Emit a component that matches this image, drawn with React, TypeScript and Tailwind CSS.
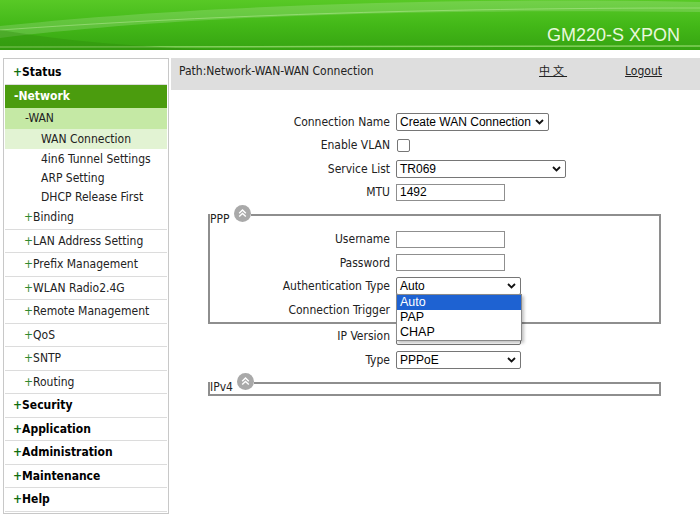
import React from "react";

const LABEL_FONT = "font-['DejaVu_Sans_Condensed','DejaVu_Sans',sans-serif]";
const CTRL_FONT = "font-['Liberation_Sans',Arial,sans-serif]";

type Item = { text: string; kind: "top" | "open" | "wan" | "active" | "leaf" | "sub" };

const MENU: Item[] = [
    { text: "Status", kind: "top" },
    { text: "Network", kind: "open" },
    { text: "WAN", kind: "wan" },
    { text: "WAN Connection", kind: "active" },
    { text: "4in6 Tunnel Settings", kind: "leaf" },
    { text: "ARP Setting", kind: "leaf" },
    { text: "DHCP Release First", kind: "leaf" },
    { text: "Binding", kind: "sub" },
    { text: "LAN Address Setting", kind: "sub" },
    { text: "Prefix Management", kind: "sub" },
    { text: "WLAN Radio2.4G", kind: "sub" },
    { text: "Remote Management", kind: "sub" },
    { text: "QoS", kind: "sub" },
    { text: "SNTP", kind: "sub" },
    { text: "Routing", kind: "sub" },
    { text: "Security", kind: "top" },
    { text: "Application", kind: "top" },
    { text: "Administration", kind: "top" },
    { text: "Maintenance", kind: "top" },
    { text: "Help", kind: "top" },
];

const MenuRow = ({ item }: { item: Item }) => {
    switch (item.kind) {
        case "top":
            return (
                <div className="flex h-[23.5px] items-center border-b border-[#dcdcdc] pl-[8px] text-[12px] font-bold text-black">
                    <span className="text-[#0f6e0f]">+</span>
                    {item.text}
                </div>
            );
        case "open":
            return (
                <div className="flex h-[23px] items-center bg-[#4b9c0e] pl-[9px] text-[12px] font-bold text-white">
                    -{item.text}
                </div>
            );
        case "wan":
            return (
                <div className="flex h-[21.5px] items-center bg-[#c5e9a5] pl-[20px] text-[12px] text-[#222]">
                    -{item.text}
                </div>
            );
        case "active":
            return (
                <div className="flex h-[20px] items-center bg-[#e2f3d3] pl-[36px] text-[12px] text-[#222]">
                    {item.text}
                </div>
            );
        case "leaf":
            return (
                <div className="flex h-[19px] items-center pl-[36px] text-[12px] text-[#222]">
                    {item.text}
                </div>
            );
        default:
            return (
                <div className="flex h-[23.5px] items-center border-b border-[#dcdcdc] pl-[19px] text-[12px] text-[#222]">
                    <span className="text-[#2f8a2f]">+</span>
                    {item.text}
                </div>
            );
    }
};

const Chevron = () => (
    <svg width="9" height="6" viewBox="0 0 9 6" className="shrink-0">
        <path d="M1 1 L4.5 4.5 L8 1" fill="none" stroke="#111" strokeWidth="1.8" />
    </svg>
);

const Select = ({ value, w }: { value: string; w: string }) => (
    <div className={`flex h-[18px] ${w} items-center justify-between rounded-[2px] border border-[#767676] bg-white pl-[3px] pr-[4px] text-[12px] text-black ${CTRL_FONT}`}>
        <span>{value}</span>
        <Chevron />
    </div>
);

const TextBox = ({ value = "" }: { value?: string }) => (
    <div className={`flex h-[17px] w-[109px] items-center border border-[#8f8f8f] bg-white pl-[3px] text-[12px] text-black ${CTRL_FONT}`}>
        {value}
    </div>
);

const CollapseIcon = () => (
    <svg width="17" height="17" viewBox="0 0 17 17" className="shrink-0">
        <circle cx="8.5" cy="8.5" r="8.5" fill="#a9a9a9" />
        <path d="M5.2 8.2 L8.5 5 L11.8 8.2 M5.2 11.6 L8.5 8.4 L11.8 11.6" fill="none" stroke="#fff" strokeWidth="1.4" />
    </svg>
);

const Row = ({ label, labelW, children }: { label: string; labelW: string; children: React.ReactNode }) => (
    <div className="flex h-[23.5px] items-center">
        <div className={`${labelW} shrink-0 pr-[6px] text-right text-[12px] text-[#222]`}>{label}</div>
        {children}
    </div>
);

const Legend = ({ text }: { text: string }) => (
    <legend className="ml-0 flex items-start p-0">
        <span className="mt-[8px] text-[12px] leading-[14px] text-[#222]">{text}</span>
        <span className="ml-[4px] mt-[1px]">
            <CollapseIcon />
        </span>
    </legend>
);

const Header = () => (
    <header className="relative h-[50px] overflow-hidden bg-gradient-to-b from-[#58c926] via-[#43b818] to-[#36a411]">
        <svg className="absolute inset-0 h-full w-full" viewBox="0 0 700 50" preserveAspectRatio="none">
            <path d="M0 38 C150 20 350 8 700 12 L700 2 C400 -4 150 10 0 26 Z" fill="#ffffff" opacity="0.16" />
            <path d="M0 30 C200 16 420 8 700 8" fill="none" stroke="#c6f0a6" strokeWidth="1" opacity="0.45" />
            <path d="M0 47 C200 46 500 47 700 46" fill="none" stroke="#a4e07c" strokeWidth="1.5" opacity="0.7" />
            <path d="M0 50 L0 30 C60 40 120 46 220 50 Z" fill="#2d8a0c" opacity="0.35" />
        </svg>
        <div className="relative flex h-full items-end justify-end pb-px pr-[20px]">
            <span className="font-['Liberation_Sans',Arial,sans-serif] text-[18px] text-[#e9f8dc]">GM220-S XPON</span>
        </div>
    </header>
);

export default function App() {
    const mainLabel = "w-[225px]";
    const boxLabel = "w-[186px]";

    return (
        <div className={`h-[516px] w-[700px] overflow-hidden bg-white ${LABEL_FONT}`}>
            <Header />
            <div className="flex pt-[8px]">
                {/* Left menu */}
                <nav className="ml-[3px] w-[166px] shrink-0 border border-[#c8c8c8] px-px pb-px pt-[2px]">
                    {MENU.map((m) => (
                        <MenuRow key={m.text} item={m} />
                    ))}
                </nav>

                {/* Content */}
                <main className="ml-[2px] flex-1">
                    <div className="flex h-[32px] items-start bg-[#dedede] pl-[8px] pt-[4px] text-[12px] text-[#222]">
                        <span className="flex-1">Path:Network-WAN-WAN Connection</span>
                        <span className="mr-[58px] font-['Noto_Sans_CJK_SC',sans-serif] text-[11px] tracking-[3px] underline">中文</span>
                        <span className="mr-[38px] underline">Logout</span>
                    </div>

                    <div className="pt-[20px]">
                        <Row label="Connection Name" labelW={mainLabel}>
                            <Select value="Create WAN Connection" w="w-[153px]" />
                        </Row>
                        <Row label="Enable VLAN" labelW={mainLabel}>
                            <div className="ml-px h-[13px] w-[13px] rounded-[2px] border border-[#767676] bg-white" />
                        </Row>
                        <Row label="Service List" labelW={mainLabel}>
                            <Select value="TR069" w="w-[170px]" />
                        </Row>
                        <Row label="MTU" labelW={mainLabel}>
                            <TextBox value="1492" />
                        </Row>

                        <fieldset className="ml-[37px] w-[453px] border-2 border-[#8e8e8e] p-0 pt-[1.5px]">
                            <Legend text="PPP" />
                            <Row label="Username" labelW={boxLabel}>
                                <TextBox />
                            </Row>
                            <Row label="Password" labelW={boxLabel}>
                                <TextBox />
                            </Row>
                            <Row label="Authentication Type" labelW={boxLabel}>
                                <div className="relative">
                                    <Select value="Auto" w="w-[125px]" />
                                    {/* open dropdown list */}
                                    <div className={`absolute left-0 top-[17px] z-10 w-[126px] border border-[#8a8a8a] bg-white text-[12.5px] text-black shadow-[2px_2px_3px_rgba(0,0,0,0.25)] ${CTRL_FONT}`}>
                                        <div className="h-[15px] bg-[#1e62d2] pl-[3px] leading-[15px] text-white">Auto</div>
                                        <div className="h-[15px] pl-[3px] leading-[15px]">PAP</div>
                                        <div className="h-[15px] pl-[3px] leading-[15px]">CHAP</div>
                                    </div>
                                </div>
                            </Row>
                            <Row label="Connection Trigger" labelW={boxLabel}>
                                <Select value="" w="w-[125px]" />
                            </Row>
                        </fieldset>

                        <div className="pt-[1px]">
                            <Row label="IP Version" labelW={mainLabel}>
                                <Select value="" w="w-[125px]" />
                            </Row>
                            <Row label="Type" labelW={mainLabel}>
                                <Select value="PPPoE" w="w-[125px]" />
                            </Row>
                        </div>

                        <fieldset className="ml-[37px] w-[453px] border-2 border-[#8e8e8e] p-0">
                            <Legend text="IPv4" />
                        </fieldset>
                    </div>
                </main>
            </div>
        </div>
    );
}
